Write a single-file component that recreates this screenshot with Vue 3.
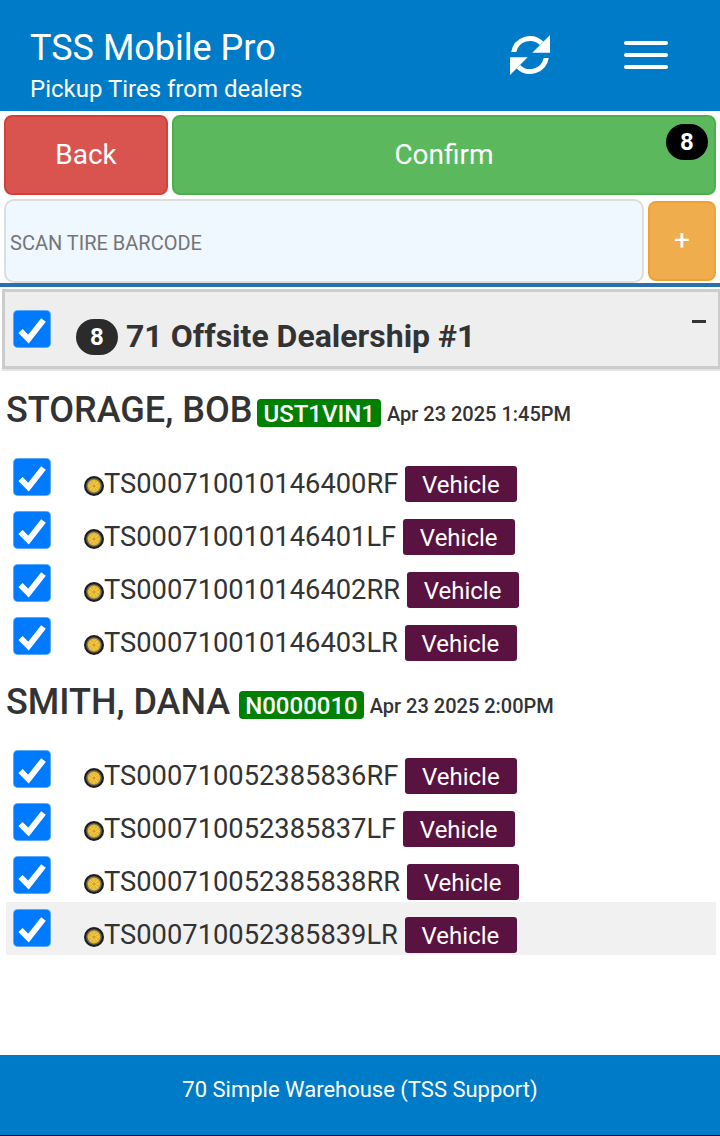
<script setup>
const groups = [
  { name: 'STORAGE, BOB', vin: 'UST1VIN1', date: 'Apr 23 2025 1:45PM', tires: ['TS000710010146400RF','TS000710010146401LF','TS000710010146402RR','TS000710010146403LR'] },
  { name: 'SMITH, DANA', vin: 'N0000010', date: 'Apr 23 2025 2:00PM', tires: ['TS000710052385836RF','TS000710052385837LF','TS000710052385838RR','TS000710052385839LR'] },
]
const spokes = [0, 45, 90, 135]
</script>

<template>
  <div class="page">
    <header class="top">
      <div class="titles">
        <div class="title">TSS Mobile Pro</div>
        <div class="sub">Pickup Tires from dealers</div>
      </div>
      <svg class="sync" viewBox="0 0 40 40" width="40" height="40">
        <g>
          <path d="M1.24 17A19 19 0 0 1 33.4 6.6L29.9 10.1A14 14 0 0 0 6.3 17Z" fill="#fff"/>
          <path d="M40 0V17.7H22.3Z" fill="#fff"/>
        </g>
        <g transform="rotate(180 20 20)">
          <path d="M1.24 17A19 19 0 0 1 33.4 6.6L29.9 10.1A14 14 0 0 0 6.3 17Z" fill="#fff"/>
          <path d="M40 0V17.7H22.3Z" fill="#fff"/>
        </g>
      </svg>
      <div class="burger"><i></i><i></i><i></i></div>
    </header>

    <div class="actions">
      <button class="btn back">Back</button>
      <button class="btn confirm">Confirm<span class="count">8</span></button>
    </div>

    <div class="scan">
      <div class="field">SCAN TIRE BARCODE</div>
      <button class="plus">+</button>
    </div>

    <div class="rule"></div>

    <section class="panel">
      <span class="check"><svg viewBox="0 0 38 38" width="38" height="38"><path d="M7.5 21l8 8L30.5 10" fill="none" stroke="#fff" stroke-width="6"/></svg></span>
      <span class="pill">8</span>
      <span class="panel-title">71 Offsite Dealership #1</span>
      <span class="minus"></span>
    </section>

    <main class="list">
      <div v-for="g in groups" :key="g.name" class="group">
        <div class="person">
          <span class="name">{{ g.name }}</span>
          <span class="vin">{{ g.vin }}</span>
          <span class="date">{{ g.date }}</span>
        </div>
        <div class="rows">
          <div v-for="t in g.tires" :key="t" class="row" :class="{ hl: t.endsWith('839LR') }">
            <span class="check"><svg viewBox="0 0 38 38" width="38" height="38"><path d="M7.5 21l8 8L30.5 10" fill="none" stroke="#fff" stroke-width="6"/></svg></span>
            <svg class="tire" viewBox="0 0 20 20" width="20" height="20">
              <circle cx="10" cy="10" r="10" fill="#1d1d1d"/>
              <circle cx="10" cy="10" r="7.8" fill="#6e6a5e"/>
              <circle cx="10" cy="10" r="6.4" fill="#e6b62a"/>
              <line v-for="s in spokes" :key="s" x1="4.5" y1="10" x2="15.5" y2="10" stroke="#f2d568" stroke-width="0.9" :transform="`rotate(${s} 10 10)`"/>
              <circle cx="10" cy="10" r="1.6" fill="#c9a024"/>
            </svg>
            <span class="code">{{ t }}</span>
            <span class="vehicle">Vehicle</span>
          </div>
        </div>
      </div>
    </main>

    <footer class="foot">70 Simple Warehouse (TSS Support)</footer>
  </div>
</template>

<style>
html, body { margin: 0; background: #fff; }
</style>

<style scoped>
.page {
  width: 720px;
  height: 1136px;
  display: flex;
  flex-direction: column;
  font-family: Roboto, "Liberation Sans", sans-serif;
  color: #333;
  overflow: hidden;
  background: #fff;
}
.top {
  height: 111px;
  flex: none;
  background: #007bc7;
  color: #fff;
  display: flex;
  align-items: flex-start;
  padding-left: 30px;
  box-sizing: border-box;
}
.titles { width: 480px; padding-top: 28px; }
.title { font-size: 36px; line-height: 41px; }
.sub { font-size: 24px; line-height: 28px; margin-top: 6px; }
.sync { margin-top: 35px; flex: none; }
.burger { margin: 41px 0 0 74px; display: flex; flex-direction: column; gap: 8px; }
.burger i { display: block; width: 44px; height: 4px; border-radius: 2px; background: #fff; }
.actions { display: flex; gap: 4px; padding: 4px 4px 0; height: 80px; flex: none; }
.btn {
  font: inherit;
  font-size: 28px;
  color: #fff;
  border-radius: 8px;
  border: 2px solid;
  padding: 0 0 2px;
  box-sizing: border-box;
  height: 80px;
}
.back { width: 164px; background: #d9534f; border-color: #d43f3a; }
.confirm { flex: 1; background: #5cb85c; border-color: #4cae4c; position: relative; }
.count {
  position: absolute;
  top: 7px;
  right: 6px;
  width: 42px;
  height: 36px;
  border-radius: 18px;
  background: #000;
  color: #fff;
  font-size: 24px;
  font-weight: 700;
  line-height: 36px;
  text-align: center;
}
.scan { display: flex; gap: 4px; padding: 4px 4px 0; flex: none; height: 84px; }
.field {
  width: 640px;
  height: 84px;
  box-sizing: border-box;
  background: #eff7ff;
  border: 2px solid #ddd;
  border-radius: 10px;
  color: #757575;
  font-size: 20px;
  line-height: 84px;
  padding-left: 4px;
}
.plus {
  width: 68px;
  height: 80px;
  margin-top: 2px;
  box-sizing: border-box;
  background: #f0ad4e;
  border: 2px solid #eea236;
  border-radius: 8px;
  color: #fff;
  font: inherit;
  font-size: 28px;
  padding: 0 0 4px;
}
.rule { height: 4px; background: #2a70ad; flex: none; }
.panel {
  margin: 2px 0 0 2px;
  height: 80px;
  box-sizing: border-box;
  border: 3px solid #ccc;
  border-right-width: 2px;
  background: #eee;
  flex: none;
  display: flex;
  align-items: flex-start;
  position: relative;
  box-shadow: 0 2px 0 #e4e4e4;
}
.check {
  width: 38px;
  height: 38px;
  flex: none;
  background: #007bff;
  box-shadow: inset 0 0 0 0.5px #b8d6f5;
  border-radius: 5px;
  display: block;
  line-height: 0;
}
.panel .check { margin: 18px 0 0 8px; }
.pill {
  margin: 27px 0 0 25px;
  width: 42px;
  height: 36px;
  border-radius: 18px;
  background: #2b2b2b;
  color: #fff;
  font-size: 24px;
  font-weight: 700;
  line-height: 36px;
  text-align: center;
  flex: none;
}
.panel-title {
  margin: 25px 0 0 8px;
  font-size: 32px;
  line-height: 38px;
  font-weight: 700;
}
.minus { position: absolute; right: 12px; top: 28px; width: 14px; height: 3px; background: #333; }
.list { flex: 1; padding: 21px 4px 0 6px; }
.group + .group { margin-top: 19px; }
.person { display: flex; align-items: flex-start; height: 40px; }
.name { font-size: 36px; line-height: 40px; font-weight: 500; }
.vin {
  margin: 9px 0 0 5px;
  height: 28px;
  background: #008000;
  color: #fff;
  font-size: 24px;
  font-weight: 500;
  line-height: 30px;
  padding: 0 6px;
  border-radius: 4px;
}
.group + .group .vin { margin-left: 9px; }
.date { margin: 10px 0 0 6px; line-height: 28px; font-size: 20px; font-weight: 500; }
.rows { margin-top: 21px; }
.row { height: 53px; display: flex; align-items: flex-start; position: relative; }
.row .check { margin: 7px 0 0 7px; }
.row.hl { background: #f1f1f1; }
.tire { margin: 25px 0 0 33px; flex: none; }
.code { font-size: 27.3px; line-height: 32px; margin: 17px 0 0 0; }
.vehicle {
  margin: 15px 0 0 7px;
  width: 112px;
  height: 36px;
  box-sizing: border-box;
  padding-right: 1px;
  background: #5a1340;
  color: #fff;
  font-size: 24px;
  line-height: 38px;
  text-align: center;
  border-radius: 3px;
}
.foot {
  height: 81px;
  box-sizing: border-box;
  border-bottom: 1px solid #000;
  flex: none;
  background: #007bc7;
  color: #fff;
  font-size: 22px;
  line-height: 69px;
  text-align: center;
}
</style>
